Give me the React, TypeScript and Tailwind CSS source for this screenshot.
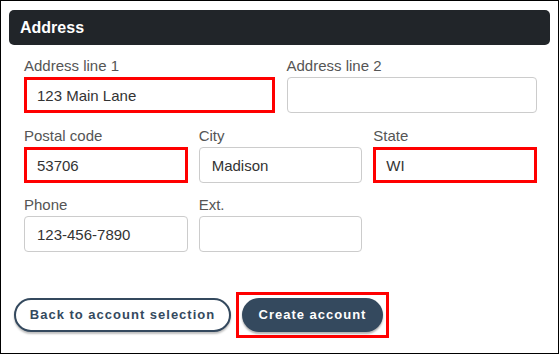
const Field = ({ label, value = "", marked = false }: { label: string; value?: string; marked?: boolean }) => {
    return (
        <div className="flex flex-col">
            <label className="text-[15px] leading-[17px] text-[#555555]">{label}</label>
            <input
                type="text"
                defaultValue={value}
                className={`mt-[3px] h-[36px] w-full text-[15px] text-[#333333] bg-white outline-none ${
                    marked ? "border-[3px] border-[#ff0000] pl-[10px]" : "border border-[#cccccc] rounded-[4px] pl-[12px]"
                }`}
            />
        </div>
    )
}

export default function App() {
    return (
        <div className="w-[559px] h-[354px] border border-black bg-white font-['Liberation_Sans',Arial,sans-serif] overflow-hidden">
            <div className="mx-2 mt-[9px] h-[35px] rounded-[5px] bg-[#212529] px-[11px] flex items-center">
                <h2 className="text-white font-bold text-[16px]">Address</h2>
            </div>
            <div className="pl-[23px] pr-[21px] pt-[12px]">
                <div className="grid grid-cols-2 gap-x-[12px]">
                    <Field label="Address line 1" value="123 Main Lane" marked />
                    <Field label="Address line 2" />
                </div>
                <div className="grid grid-cols-3 gap-x-[11px] mt-[14px]">
                    <Field label="Postal code" value="53706" marked />
                    <Field label="City" value="Madison" />
                    <Field label="State" value="WI" marked />
                </div>
                <div className="grid grid-cols-3 gap-x-[11px] mt-[13px]">
                    <Field label="Phone" value="123-456-7890" />
                    <Field label="Ext." />
                </div>
            </div>
            <div className="flex items-center gap-[5px] pl-[13px] mt-[40px]">
                <button className="w-[217px] h-[34px] rounded-full border-2 border-[#34495e] bg-white text-[#34495e] text-[13px] font-bold tracking-[1px] shadow-[0_2px_2px_rgba(0,0,0,0.25)]">
                    Back to account selection
                </button>
                <div className="border-[3px] border-[#ff0000] p-[3px]">
                    <button className="w-[141px] h-[34px] rounded-full bg-[#34495e] text-white text-[13px] font-bold tracking-[1px] shadow-[0_2px_2px_rgba(0,0,0,0.3)]">
                        Create account
                    </button>
                </div>
            </div>
        </div>
    )
}
